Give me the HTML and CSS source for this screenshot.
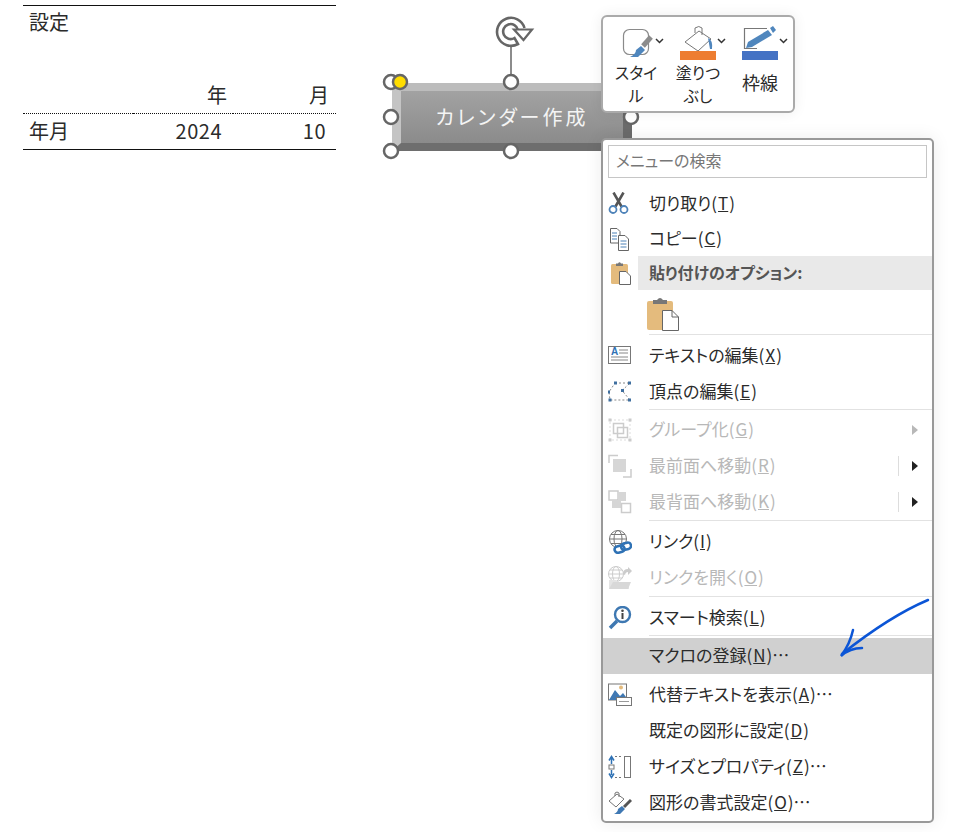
FILE: index.html
```html
<!DOCTYPE html>
<html lang="ja">
<head>
  <meta charset="UTF-8">
  <title>マクロの登録</title>
  <link rel="stylesheet" href="styles.css">
</head>
<body>
  <table class="sheet">
    <tr class="sheet-top"><td>設定</td><td></td><td></td></tr>
    <tr><td></td><td></td><td></td></tr>
    <tr class="sheet-head"><td></td><td class="col-year">年</td><td class="col-month">月</td></tr>
    <tr class="sheet-data"><td>年月</td><td class="val-year">2024</td><td class="val-month">10</td></tr>
  </table>

  <div class="shape">カレンダー作成</div>

  <svg class="handles" width="270" height="170" viewBox="380 0 270 170">
    <line x1="511" y1="46" x2="511" y2="82" stroke="#666" stroke-width="1.5"/>
    <path d="M524.500 28A14 14 0 1 0 518 44L514.500 38A7.500 7.500 0 1 1 518 30" fill="none" stroke="#666" stroke-width="2.600"/>
    <path d="M514 29.500H532L523.500 40Z" fill="#fff" stroke="#666" stroke-width="2.200"/>
    <g fill="#fff" stroke="#666" stroke-width="2.500">
      <circle cx="391" cy="82" r="7"/>
      <circle cx="511" cy="82" r="7"/>
      <circle cx="391" cy="117" r="7"/>
      <circle cx="631" cy="117" r="7"/>
      <circle cx="391" cy="151" r="7"/>
      <circle cx="511" cy="151" r="7"/>
      <circle cx="400" cy="82" r="7" fill="#ffdd00"/>
    </g>
  </svg>

  <div class="toolbar">
    <div class="tool">
      <svg width="62" height="36" viewBox="0 0 62 36">
        <rect x="18.500" y="4.500" width="25" height="25" rx="6" fill="#fff" stroke="#8a8a8a" stroke-width="1.200"/>
        <path d="M46 12L38 21" stroke="#8c8c8c" stroke-width="5"/>
        <path d="M36 21L40 25L33 32L25 32Q31 29 31 25Z" fill="#4f86bd"/>
        <path d="M51 14l3.500 3.500L58 14" fill="none" stroke="#333" stroke-width="1.500"/>
      </svg>
      <div class="tool-label">スタイ<br>ル</div>
    </div>
    <div class="tool">
      <svg width="62" height="36" viewBox="0 0 62 36">
        <path d="M32 6L18 17L31 26L44 14Z" fill="#fff" stroke="#777" stroke-width="1"/>
        <path d="M28 8V3Q32 0 35 3L35 10" fill="none" stroke="#777" stroke-width="1"/>
        <path d="M41 13Q46 15 45 24L43 24Z" fill="#4f86bd"/>
        <rect x="13" y="26" width="36" height="9" fill="#ed7d31"/>
        <path d="M51 14l3.500 3.500L58 14" fill="none" stroke="#333" stroke-width="1.500"/>
      </svg>
      <div class="tool-label">塗りつ<br>ぶし</div>
    </div>
    <div class="tool">
      <svg width="62" height="36" viewBox="0 0 62 36">
        <path d="M38 3.500H15.500V23.500H28" fill="none" stroke="#777" stroke-width="1.200"/>
        <path d="M17 23L19 17L39 5L43 10L23 22Z" fill="#4f86bd"/>
        <path d="M41 3L44 1L47 5L44 8Z" fill="#4f86bd"/>
        <rect x="13" y="26" width="36" height="9" fill="#4472c4"/>
        <path d="M51 14l3.500 3.500L58 14" fill="none" stroke="#333" stroke-width="1.500"/>
      </svg>
      <div class="tool-label tool-label-one">枠線</div>
    </div>
  </div>

  <div class="menu">
    <div class="menu-search">メニューの検索</div>

    <div class="item">
      <svg class="icon" viewBox="0 0 24 24">
        <path d="M7.500 14.500L15.500 0.500M13.500 14.500L5.500 0.500" stroke="#555" stroke-width="2.600" fill="none"/>
        <circle cx="5" cy="17.500" r="3.500" fill="none" stroke="#4d82b8" stroke-width="1.800"/>
        <circle cx="16" cy="17.500" r="3.500" fill="none" stroke="#4d82b8" stroke-width="1.800"/>
      </svg>
      <span>切り取り(<u>T</u>)</span>
    </div>
    <div class="item item-short">
      <svg class="icon" viewBox="0 0 24 24">
        <path d="M2.500 1.500H9L12 4.500V16H2.500Z" fill="#fff" stroke="#666"/>
        <path d="M10.500 8.500H17L20.500 12V23.500H10.500Z" fill="#fff" stroke="#666"/>
        <path d="M4 6H9M4 9H9M4 12H9M12.500 14H18.500M12.500 17H18.500M12.500 20H18.500" stroke="#4d82b8"/>
      </svg>
      <span>コピー(<u>C</u>)</span>
    </div>
    <div class="item item-head">
      <svg class="icon" viewBox="0 0 24 24">
        <rect x="3" y="3" width="17" height="20" rx="1.500" fill="#e4bb7d"/>
        <path d="M8 5V2.500H10Q11.500 0 13 2.500H15V5Z" fill="#777"/>
        <path d="M11.500 10.500H18L22.500 15V23.500H11.500Z" fill="#fff" stroke="#666"/>
      </svg>
      <span class="head-label">貼り付けのオプション:</span>
    </div>
    <div class="item-paste">
      <svg width="32" height="34" viewBox="0 0 32 34">
        <rect x="0" y="4" width="26" height="29" rx="2" fill="#e4bb7d"/>
        <path d="M6 7V3H10Q13 -1 16 3H20V7Z" fill="#777"/>
        <path d="M15.500 13.500H25L31.500 20V33.500H15.500Z" fill="#fff" stroke="#666"/>
        <path d="M25 13.500V20H31.500" fill="none" stroke="#666"/>
      </svg>
    </div>

    <div class="sep"></div>
    <div class="item">
      <svg class="icon" viewBox="0 0 24 24">
        <rect x="0.500" y="2.500" width="22" height="17" fill="#fff" stroke="#777"/>
        <text x="3" y="11" class="icon-a">A</text>
        <path d="M11 6H20M11 9H20M3 13H20M3 16H20" stroke="#888"/>
      </svg>
      <span>テキストの編集(<u>X</u>)</span>
    </div>
    <div class="item">
      <svg class="icon" viewBox="0 0 24 24">
        <path d="M7 3H22L14 10.500L22 20H2L1 12Z" fill="none" stroke="#888" stroke-dasharray="2 2"/>
        <g fill="#3f6f9f">
          <rect x="6" y="1.500" width="3" height="3"/>
          <rect x="20" y="1.500" width="3" height="3"/>
          <rect x="13" y="9" width="3" height="3"/>
          <rect x="20" y="18.500" width="3" height="3"/>
          <rect x="0.500" y="18.500" width="3" height="3"/>
          <rect x="0" y="10.500" width="2" height="3"/>
        </g>
      </svg>
      <span>頂点の編集(<u>E</u>)</span>
    </div>

    <div class="sep sep-tight"></div>
    <div class="item item-off">
      <svg class="icon" viewBox="0 0 24 24">
        <rect x="2" y="2" width="20" height="20" fill="none" stroke="#ddd" stroke-dasharray="2 2"/>
        <rect x="5.500" y="5.500" width="10" height="10" fill="none" stroke="#ccc" stroke-width="1.500"/>
        <rect x="9.500" y="9.500" width="10" height="10" fill="none" stroke="#ccc" stroke-width="1.500"/>
        <g fill="#ccc">
          <rect x="0.500" y="0.500" width="3" height="3"/>
          <rect x="20.500" y="0.500" width="3" height="3"/>
          <rect x="0.500" y="20.500" width="3" height="3"/>
          <rect x="20.500" y="20.500" width="3" height="3"/>
        </g>
      </svg>
      <span>グループ化(<u>G</u>)</span>
      <i class="arrow"></i>
    </div>
    <div class="item item-off">
      <svg class="icon" viewBox="0 0 24 24">
        <path d="M1 9V1.500H10" fill="none" stroke="#ccc" stroke-width="1.500"/>
        <rect x="5" y="5" width="13" height="13" fill="#d6d6d6"/>
        <path d="M23 15V23H15" fill="none" stroke="#ccc" stroke-width="1.500"/>
      </svg>
      <span>最前面へ移動(<u>R</u>)</span>
      <i class="split"></i>
      <i class="arrow arrow-on"></i>
    </div>
    <div class="item item-off">
      <svg class="icon" viewBox="0 0 24 24">
        <rect x="1" y="1" width="9" height="9" fill="#fff" stroke="#ccc" stroke-width="1.500"/>
        <rect x="10" y="2" width="8" height="9" fill="#d6d6d6"/>
        <rect x="4" y="10" width="9" height="8" fill="#d6d6d6"/>
        <rect x="13.500" y="13.500" width="9" height="9" fill="#fff" stroke="#ccc" stroke-width="1.500"/>
      </svg>
      <span>最背面へ移動(<u>K</u>)</span>
      <i class="split"></i>
      <i class="arrow arrow-on"></i>
    </div>

    <div class="sep"></div>
    <div class="item">
      <svg class="icon" viewBox="0 0 24 24">
        <g fill="none" stroke="#777">
          <circle cx="10" cy="9" r="8.500"/>
          <ellipse cx="10" cy="9" rx="4" ry="8.500"/>
          <path d="M1.500 9H18.500M3 4.500H17M3 13.500H17"/>
        </g>
        <rect x="6.500" y="16" width="10" height="6.500" rx="3.200" fill="#fff" stroke="#2f72b5" stroke-width="2.600" transform="rotate(-15 11 19)"/>
        <rect x="13" y="13" width="10" height="6.500" rx="3.200" fill="none" stroke="#2f72b5" stroke-width="2.600" transform="rotate(-15 18 16)"/>
      </svg>
      <span>リンク(<u>I</u>)</span>
    </div>
    <div class="item item-off">
      <svg class="icon" viewBox="0 0 24 24">
        <g fill="none" stroke="#ccc">
          <circle cx="8" cy="8" r="7.500"/>
          <ellipse cx="8" cy="8" rx="3.500" ry="7.500"/>
          <path d="M0.500 8H15.500M2 4H14M2 12H14"/>
        </g>
        <path d="M15 8Q15 3 20 3V1L24 5L20 9V6Q17.500 6 17 9Z" fill="#ccc"/>
        <path d="M1 23V14H8L10 16H21V23Z" fill="#e4e4e4"/>
        <path d="M1 23L5 16H23L20 23Z" fill="#d8d8d8"/>
      </svg>
      <span>リンクを開く(<u>O</u>)</span>
    </div>

    <div class="sep"></div>
    <div class="item">
      <svg class="icon" viewBox="0 0 24 24">
        <circle cx="14.500" cy="8.500" r="7.500" fill="#fff" stroke="#3e78b2" stroke-width="2.400"/>
        <path d="M2 22L9 15" stroke="#3e78b2" stroke-width="3.500"/>
        <circle cx="14.500" cy="4.800" r="1.300" fill="#444"/>
        <rect x="13.500" y="7" width="2" height="6" fill="#444"/>
      </svg>
      <span>スマート検索(<u>L</u>)</span>
    </div>

    <div class="sep sep-tight"></div>
    <div class="item item-on">
      <span class="icon"></span>
      <span>マクロの登録(<u>N</u>)…</span>
    </div>

    <div class="item item-after">
      <svg class="icon" viewBox="0 0 24 24">
        <rect x="0.500" y="1" width="18" height="16" fill="#fff" stroke="#777"/>
        <circle cx="13" cy="4.500" r="2" fill="#e4bb7d"/>
        <path d="M1 17L7 7L12 13L15 10L18 14V17Z" fill="#3f78b3"/>
        <rect x="8.500" y="14.500" width="15" height="8" fill="#fff" stroke="#777"/>
        <path d="M11 18.500H21" stroke="#999"/>
      </svg>
      <span>代替テキストを表示(<u>A</u>)…</span>
    </div>
    <div class="item">
      <span class="icon"></span>
      <span>既定の図形に設定(<u>D</u>)</span>
    </div>
    <div class="item">
      <svg class="icon" viewBox="0 0 24 24">
        <path d="M3.500 9V4M1 5.500L3.500 1.500L6 5.500M3.500 15V20M1 18.500L3.500 22.500L6 18.500" fill="none" stroke="#2f72b5" stroke-width="1.500"/>
        <rect x="1" y="10" width="5" height="4" fill="#fff" stroke="#777"/>
        <path d="M7 1.500H15M7 22.500H15" stroke="#777" stroke-dasharray="2 2"/>
        <rect x="16.500" y="1.500" width="6" height="21" fill="#fff" stroke="#777"/>
      </svg>
      <span>サイズとプロパティ(<u>Z</u>)…</span>
    </div>
    <div class="item">
      <svg class="icon" viewBox="0 0 24 24">
        <path d="M9 3L1 10L8 16L16 8Z" fill="#fff" stroke="#777"/>
        <path d="M7 5V2Q9 0 11 2V6" fill="none" stroke="#777"/>
        <path d="M23 9L16 16" stroke="#555" stroke-width="3"/>
        <path d="M14 15L17 18L12 23L6 23Q10 21 10 18Z" fill="#3f78b3"/>
      </svg>
      <span>図形の書式設定(<u>O</u>)…</span>
    </div>
  </div>

  <svg class="pen-arrow" width="100" height="70" viewBox="835 595 100 70">
    <path d="M928 600Q890 616 842 654" fill="none" stroke="#0b55d6" stroke-width="2.500" stroke-linecap="round"/>
    <path d="M853 630Q850 644 841 656Q850 648 862 648" fill="none" stroke="#0b55d6" stroke-width="2.500" stroke-linecap="round"/>
  </svg>
</body>
</html>
```

FILE: styles.css
```css
body {
  font-family: "Noto Sans CJK JP", "Noto Sans", sans-serif;
  font-feature-settings: "palt";
  background-color: #fff;
  color: #2b2b2b;
  margin: 0;
  padding: 5px 0 0 23px;
  height: 827px;
  box-sizing: border-box;
  overflow: hidden;
}

/* sheet cells */
.sheet {
  width: 313px;
  border-collapse: collapse;
  table-layout: fixed;
  font-size: 20px;
  line-height: 24px;
}

.sheet td {
  height: 36px;
  padding: 0 0 0 6px;
  box-sizing: border-box;
}

.sheet-top td {
  border-top: 1px solid #111;
  padding-bottom: 3px;
}

.sheet-head td {
  border-bottom: 1px dotted #111;
}

.sheet-data td {
  border-bottom: 1px solid #111;
  padding-bottom: 2px;
}

.sheet td:nth-child(1) { width: 110px; }
.sheet td:nth-child(3) { width: 103px; }

.sheet .col-year,
.sheet .col-month,
.sheet .val-year,
.sheet .val-month {
  text-align: right;
}

.sheet .col-year { padding-right: 6px; }
.sheet .col-month { padding-right: 7px; }
.sheet .val-year { padding-right: 11px; letter-spacing: 0.5px; }
.sheet .val-month { padding-right: 10px; letter-spacing: 0.5px; }

/* selected button shape */
.shape {
  position: absolute;
  left: 392px;
  top: 83px;
  width: 240px;
  height: 68px;
  box-sizing: border-box;
  border-style: solid;
  border-width: 8px 9px;
  border-color: #bcbcbc #6b6b6b #6e6e6e #c4c4c4;
  background: linear-gradient(#a2a2a2, #8b8b8b);
  color: #f4f4f4;
  font-size: 20px;
  letter-spacing: 3px;
  padding-bottom: 2px;
  display: flex;
  align-items: center;
  justify-content: center;
}

.handles {
  position: absolute;
  left: 380px;
  top: 0;
}

/* mini toolbar */
.toolbar {
  position: absolute;
  left: 601px;
  top: 15px;
  width: 194px;
  height: 98px;
  box-sizing: border-box;
  padding: 8px 0 0 2px;
  display: flex;
  background-color: #fff;
  border: 2px solid #aaa;
  border-radius: 6px;
  box-shadow: 0 0 14px rgba(0,0,0,0.07);
}

.tool {
  width: 62px;
}

.tool svg {
  display: block;
}

.tool-label {
  font-size: 16px;
  line-height: 23px;
  text-align: center;
}

.tool-label-one {
  font-size: 18px;
  padding-top: 10px;
}

/* context menu */
.menu {
  position: absolute;
  left: 601px;
  top: 138px;
  width: 333px;
  height: 685px;
  box-sizing: border-box;
  background-color: #fff;
  border: 2px solid #999;
  border-radius: 5px;
  box-shadow: 0 0 18px rgba(0,0,0,0.08);
  font-size: 17px;
}

.menu-search {
  height: 33px;
  box-sizing: border-box;
  margin: 5px 5px 8px;
  width: 319px;
  padding-left: 7px;
  border: 1px solid #c6c6c6;
  color: #777;
  font-size: 16px;
  line-height: 29px;
}

.item {
  height: 36px;
  padding-left: 5px;
  display: flex;
  align-items: center;
}

.item span {
  margin-bottom: 3px;
}

.item u {
  padding: 0 1px;
}

.item-short {
  height: 34px;
}

.item-head {
  height: 34px;
}

.icon {
  width: 24px;
  height: 24px;
  margin-right: 17px;
  flex: none;
}

.icon-a {
  font-family: "Liberation Sans", sans-serif;
  font-size: 10px;
  font-weight: bold;
  fill: #2f72b5;
}

.item-head .icon {
  margin-right: 6px;
}

.item .head-label {
  flex: 1;
  height: 34px;
  margin-bottom: 0;
  padding-left: 11px;
  background-color: #e9e9e9;
  color: #555;
  font-weight: bold;
  font-size: 16px;
  line-height: 32px;
}

.item-paste {
  height: 44px;
  padding: 7px 0 0 44px;
  box-sizing: border-box;
}

.item-off {
  color: #b8b8b8;
}

.item-on {
  background-color: #d0d0d0;
}

.item-after {
  margin-top: 3px;
}

.sep {
  height: 1px;
  margin: 0 0 3px 46px;
  background-color: #e2e2e2;
}

.sep-tight {
  margin: -1px 0 2px 46px;
}

.split {
  width: 1px;
  height: 20px;
  margin-left: auto;
  background-color: #ddd;
}

.arrow {
  width: 0;
  height: 0;
  margin: 0 14px 0 auto;
  border-style: solid;
  border-width: 5px 0 5px 6px;
  border-color: transparent transparent transparent #b8b8b8;
}

.arrow-on {
  margin-left: 13px;
  border-left-color: #222;
}

.pen-arrow {
  position: absolute;
  left: 835px;
  top: 595px;
}
```
